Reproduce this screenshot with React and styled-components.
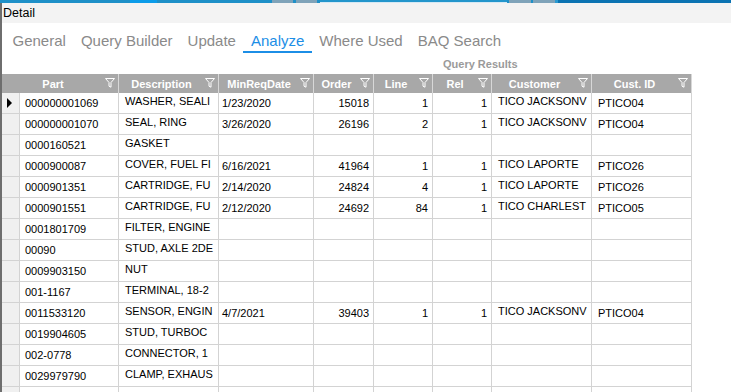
import React from "react";
import styled, { createGlobalStyle } from "styled-components";

const Global = createGlobalStyle`
  html, body { margin: 0; padding: 0; background: #fff; overflow: hidden; }
  body { font-family: "Liberation Sans", Arial, sans-serif; }
`;

const TopBar = styled.div`
  display: flex;
  height: 3px;
`;

const Segment = styled.div`
  flex: 0 0 ${(p) => p.$w}px;
  background: ${(p) => p.$c};
  box-sizing: border-box;
  border-bottom: ${(p) => (p.$line ? "1px solid #d6e9f4" : "none")};
`;

const Body = styled.div`
  display: flex;
  flex-direction: column;
  height: 389px;
  border-left: 2px solid #6e6e6e;
  overflow: hidden;
`;

const DetailBar = styled.div`
  height: 21px;
  background: #f3f3f3;
  font-size: 12.5px;
  line-height: 20px;
  color: #000;
  padding-left: 1px;
`;

const Tabs = styled.div`
  display: flex;
  margin-top: 8px;
  padding-left: 3px;
  height: 22px;
`;

const Tab = styled.div`
  padding: 0 7.5px;
  font-size: 15px;
  line-height: 20px;
  color: ${(p) => (p.$active ? "#1c8ee6" : "#8a8a8a")};
  border-bottom: 2px solid ${(p) => (p.$active ? "#1c8ee6" : "transparent")};
`;

const Caption = styled.div`
  height: 21px;
  padding-left: 441px;
  font-size: 11px;
  font-weight: bold;
  color: #9a9a9a;
  line-height: 22px;
`;

const Grid = styled.div`
  display: grid;
  grid-template-columns: 18px 99px 100px 95px 60px 59px 59px 100px 100px;
  grid-template-rows: 19px;
  grid-auto-rows: 21px;
  width: 690px;
`;

const HeadCell = styled.div`
  grid-column: span ${(p) => p.$span || 1};
  display: flex;
  align-items: center;
  background: #a8a8a8;
  border-right: 1px solid #d8d8d8;
  box-sizing: border-box;
  color: #fff;
  font-size: 11px;
  font-weight: bold;
`;

const HeadLabel = styled.span`
  flex: 1;
  text-align: center;
  white-space: nowrap;
  overflow: hidden;
`;

const FilterIcon = styled.svg`
  flex: 0 0 10px;
  height: 10px;
  margin: 0 3px 2px 1px;
`;

const RowHead = styled.div`
  display: flex;
  align-items: center;
  padding-left: 5px;
  background: #f0f0f0;
  border-right: 1px solid #d3d3d3;
  border-bottom: 1px solid #d3d3d3;
  box-sizing: border-box;
`;

const Arrow = styled.span`
  width: 0;
  height: 0;
  border-top: 5px solid transparent;
  border-bottom: 5px solid transparent;
  border-left: 5px solid #000;
`;

const Cell = styled.div`
  display: flex;
  align-items: center;
  justify-content: ${(p) => (p.$right ? "flex-end" : "flex-start")};
  padding: 0 ${(p) => (p.$right ? 4 : 0)}px ${(p) => (p.$raise ? 4 : 0)}px
    ${(p) => p.$pad || 0}px;
  border-right: 1px solid #d3d3d3;
  border-bottom: 1px solid #d3d3d3;
  box-sizing: border-box;
  font-size: 11px;
  color: #000;
  white-space: nowrap;
  overflow: hidden;
`;

const columns = [
  { key: "part", label: "Part", pad: 5 },
  { key: "desc", label: "Description", pad: 6, raise: true },
  { key: "date", label: "MinReqDate", pad: 3 },
  { key: "order", label: "Order", right: true },
  { key: "line", label: "Line", right: true },
  { key: "rel", label: "Rel", right: true },
  { key: "cust", label: "Customer", pad: 6, raise: true },
  { key: "custId", label: "Cust. ID", pad: 6 },
];

const full = (part, desc, date, order, line, rel, cust, custId) => ({
  part, desc, date, order, line, rel, cust, custId,
});

const rows = [
  full("000000001069", "WASHER, SEALI", "1/23/2020", "15018", "1", "1", "TICO JACKSONV", "PTICO04"),
  full("000000001070", "SEAL, RING", "3/26/2020", "26196", "2", "1", "TICO JACKSONV", "PTICO04"),
  full("0000160521", "GASKET"),
  full("0000900087", "COVER, FUEL FI", "6/16/2021", "41964", "1", "1", "TICO LAPORTE", "PTICO26"),
  full("0000901351", "CARTRIDGE, FU", "2/14/2020", "24824", "4", "1", "TICO LAPORTE", "PTICO26"),
  full("0000901551", "CARTRIDGE, FU", "2/12/2020", "24692", "84", "1", "TICO CHARLEST", "PTICO05"),
  full("0001801709", "FILTER, ENGINE"),
  full("00090", "STUD, AXLE 2DE"),
  full("0009903150", "NUT"),
  full("001-1167", "TERMINAL, 18-2"),
  full("0011533120", "SENSOR, ENGIN", "4/7/2021", "39403", "1", "1", "TICO JACKSONV", "PTICO04"),
  full("0019904605", "STUD, TURBOC"),
  full("002-0778", "CONNECTOR, 1"),
  full("0029979790", "CLAMP, EXHAUS"),
  full(""),
];

const segments = [
  { w: 130, c: "#1e90c8" },
  { w: 27, c: "#0c9ce9" },
  { w: 115, c: "#1e90c8" },
  { w: 21, c: "#7fa3b9" },
  { w: 3, c: "#1e90c8" },
  { w: 21, c: "#7fa3b9" },
  { w: 3, c: "#1e90c8" },
  { w: 187, c: "#2396cc", line: true },
  { w: 2, c: "#1e90c8" },
  { w: 22, c: "#7fa3b9" },
  { w: 2, c: "#1e90c8" },
  { w: 22, c: "#7fa3b9" },
  { w: 3, c: "#2a9ad0" },
  { w: 200, c: "#0b73b2" },
];

const tabs = ["General", "Query Builder", "Update", "Analyze", "Where Used", "BAQ Search"];

const Funnel = () => (
  <FilterIcon viewBox="0 0 10 10">
    <path
      d="M0.5 0.5 H9.5 L6 4.5 V9.2 L4 8.2 V4.5 Z"
      fill="none"
      stroke="#fff"
      strokeWidth="1"
      strokeLinejoin="miter"
    />
  </FilterIcon>
);

export default function App() {
  return (
    <>
      <Global />
      <TopBar>
        {segments.map((s, i) => (
          <Segment key={i} $w={s.w} $c={s.c} $line={s.line} />
        ))}
      </TopBar>
      <Body>
        <DetailBar>Detail</DetailBar>
        <Tabs>
          {tabs.map((t) => (
            <Tab key={t} $active={t === "Analyze"}>
              {t}
            </Tab>
          ))}
        </Tabs>
        <Caption>Query Results</Caption>
        <Grid>
          {columns.map((c, i) => (
            <HeadCell key={c.key} $span={i === 0 ? 2 : 1}>
              <HeadLabel>{c.label}</HeadLabel>
              <Funnel />
            </HeadCell>
          ))}
          {rows.map((r, ri) => (
            <React.Fragment key={ri}>
              <RowHead>{ri === 0 && <Arrow />}</RowHead>
              {columns.map((c) => (
                <Cell key={c.key} $pad={c.pad} $right={c.right} $raise={c.raise}>
                  {r[c.key] || ""}
                </Cell>
              ))}
            </React.Fragment>
          ))}
        </Grid>
      </Body>
    </>
  );
}
